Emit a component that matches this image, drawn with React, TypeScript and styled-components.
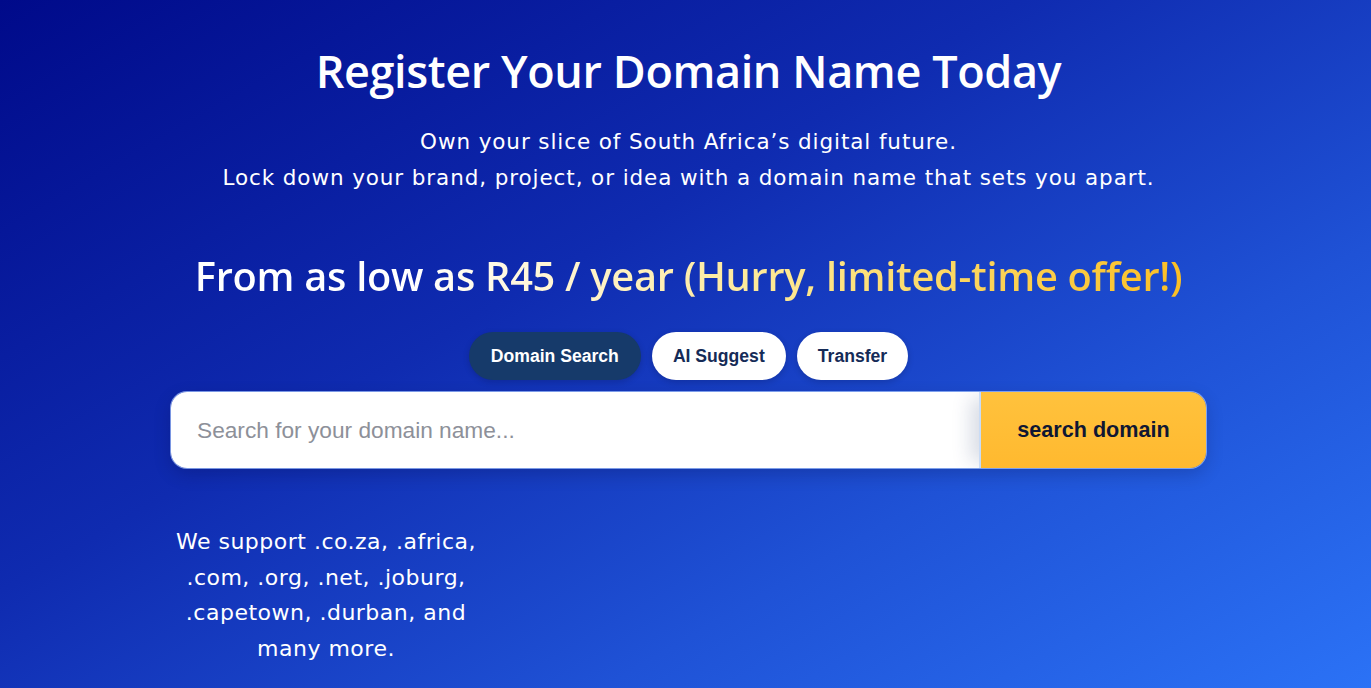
import React from "react";
import styled, { createGlobalStyle } from "styled-components";

const Global = createGlobalStyle`
  html, body { margin: 0; padding: 0; }
  body {
    background: linear-gradient(150deg, #000a8a 0%, #0f2bb0 40%, #1f52d6 70%, #2b72f6 100%);
    min-height: 688px;
    overflow: hidden;
  }
`;

const Page = styled.main`
  min-height: 688px;
  padding: 40px 0 0 6px;
  box-sizing: border-box;
  display: flex;
  flex-direction: column;
  align-items: center;
  color: #fff;
`;

const Title = styled.h1`
  margin: 0;
  font-family: "Open Sans", sans-serif;
  font-weight: 600;
  font-size: 45px;
  letter-spacing: -0.4px;
  line-height: 62px;
  text-align: center;
`;

const Lead = styled.p`
  margin: 22px 0 0;
  font-family: "DejaVu Sans", sans-serif;
  font-size: 21.5px;
  letter-spacing: 0.9px;
  line-height: 36px;
  text-align: center;
`;

const Price = styled.h2`
  margin: 54px 0 0;
  font-family: "Open Sans", sans-serif;
  font-weight: 600;
  font-size: 39.8px;
  letter-spacing: -0.3px;
  line-height: 52px;
  text-align: center;
  background: linear-gradient(90deg, #ffffff 0%, #ffffff 22%, #fff3c8 40%, #fde68a 62%, #fbbf24 100%);
  -webkit-background-clip: text;
  background-clip: text;
  color: transparent;
`;

const Tabs = styled.nav`
  display: flex;
  gap: 11px;
  margin-top: 30px;
`;

const Tab = styled.button<{ $active?: boolean }>`
  height: 48px;
  padding: 0 ${(p) => (p.$active ? 22 : 21)}px;
  border-radius: 24px;
  border: none;
  font-family: "Liberation Sans", Arial, sans-serif;
  font-weight: 700;
  font-size: 17.6px;
  background: ${(p) => (p.$active ? "#163a6a" : "#ffffff")};
  color: ${(p) => (p.$active ? "#ffffff" : "#152b57")};
  box-shadow: 0 2px 6px rgba(0, 0, 20, 0.18);
  cursor: pointer;
`;

const SearchBar = styled.form`
  display: flex;
  width: 1035px;
  height: 76px;
  margin-top: 12px;
  border-radius: 16px;
  overflow: hidden;
  box-shadow: 0 0 0 1px rgba(170, 200, 255, 0.7), 0 6px 18px rgba(0, 0, 40, 0.2);
`;

const Input = styled.input`
  flex: 1;
  border: none;
  outline: none;
  padding: 0 26px;
  font-family: "Liberation Sans", Arial, sans-serif;
  font-size: 22.7px;
  color: #1f2937;
  background: #fff;
  &::placeholder { color: #8d9099; }
`;

const SearchButton = styled.button`
  width: 227px;
  border: none;
  border-left: 2px solid #c9dcf6;
  background: linear-gradient(180deg, #ffc23d 0%, #ffb92f 100%);
  color: #0f1733;
  font-family: "Liberation Sans", Arial, sans-serif;
  font-weight: 700;
  font-size: 21.6px;
  box-shadow: -14px 0 18px -6px rgba(40, 60, 110, 0.18);
  cursor: pointer;
`;

const Footer = styled.div`
  width: 1035px;
  margin-top: 56px;
  display: flex;
`;

const Support = styled.p`
  margin: 0;
  width: 310px;
  font-family: "DejaVu Sans", sans-serif;
  font-size: 22px;
  letter-spacing: 0.5px;
  line-height: 35.5px;
  text-align: center;
`;

export default function App() {
  return (
    <>
      <Global />
      <Page>
        <Title>Register Your Domain Name Today</Title>
        <Lead>
          Own your slice of South Africa’s digital future.
          <br />
          Lock down your brand, project, or idea with a domain name that sets you apart.
        </Lead>
        <Price>From as low as R45 / year (Hurry, limited-time offer!)</Price>
        <Tabs>
          <Tab type="button" $active>Domain Search</Tab>
          <Tab type="button">AI Suggest</Tab>
          <Tab type="button">Transfer</Tab>
        </Tabs>
        <SearchBar onSubmit={(e) => e.preventDefault()}>
          <Input placeholder="Search for your domain name..." />
          <SearchButton type="submit">search domain</SearchButton>
        </SearchBar>
        <Footer>
          <Support>We support .co.za, .africa, .com, .org, .net, .joburg, .capetown, .durban, and many more.</Support>
        </Footer>
      </Page>
    </>
  );
}
